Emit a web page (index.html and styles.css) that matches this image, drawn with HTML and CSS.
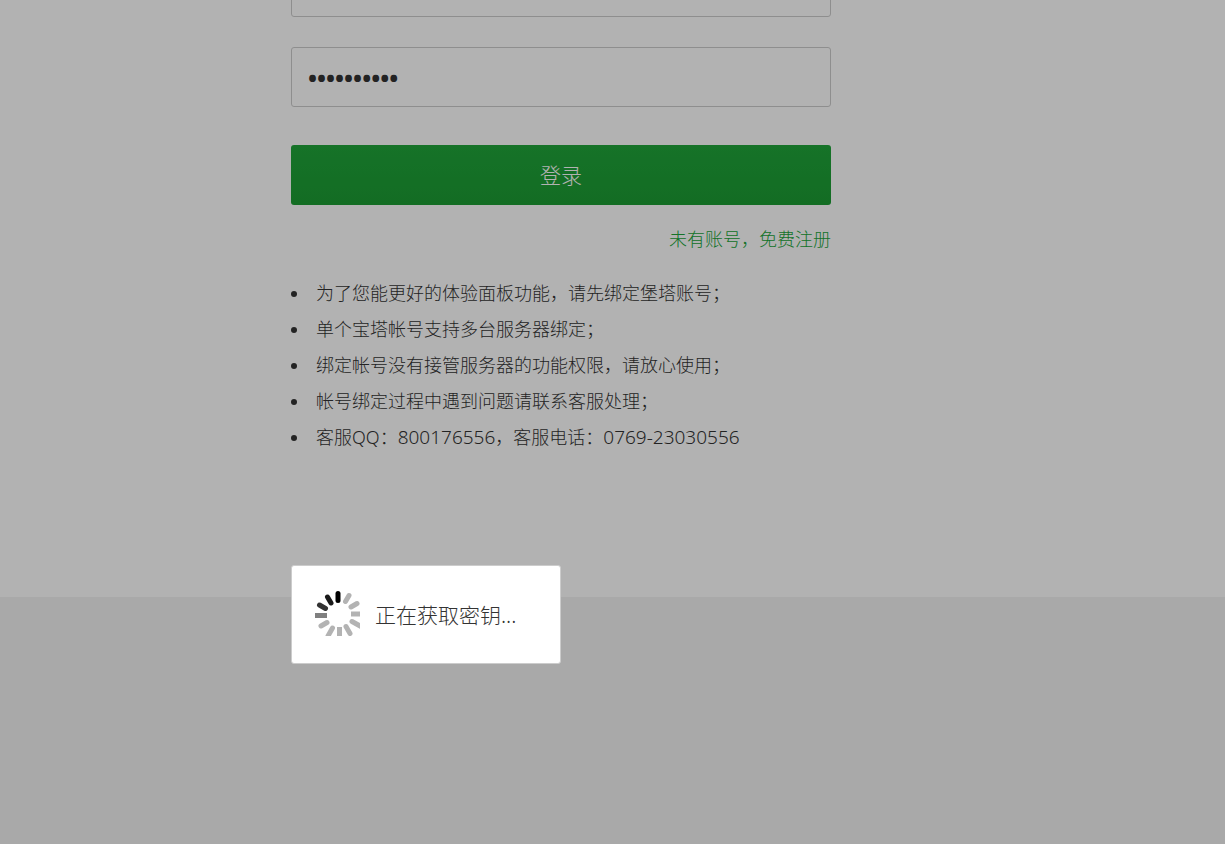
FILE: index.html
```html
<!DOCTYPE html>
<html lang="zh-CN">
<head>
    <meta charset="utf-8">
    <title>绑定宝塔账号</title>
    <link rel="stylesheet" href="styles.css">
</head>
<body>
    <main class="bind-page">
        <form class="bind-form">
            <input class="bind-input" type="text" name="username" aria-label="手机号码">
            <input class="bind-input" type="password" name="password" value="1234567890" aria-label="密码">
            <button class="login-button" type="button">登录</button>
            <div class="register">
                <a class="register-link" href="#">未有账号，免费注册</a>
            </div>
            <ul class="bind-tips">
                <li>为了您能更好的体验面板功能，请先绑定堡塔账号；</li>
                <li>单个宝塔帐号支持多台服务器绑定；</li>
                <li>绑定帐号没有接管服务器的功能权限，请放心使用；</li>
                <li>帐号绑定过程中遇到问题请联系客服处理；</li>
                <li>客服QQ：<span class="number">800176556</span>，客服电话：<span class="number">0769-23030556</span></li>
            </ul>
        </form>
    </main>

    <div class="shade"></div>
    <div class="loading" role="status">
        <svg class="loading-icon" viewBox="0 0 45 45" aria-hidden="true">
            <g fill="none" stroke="#b3b3b3" stroke-width="5">
                <path d="M30.500 10.500 34 4.500" stroke-linecap="round"/>
                <path d="M36 16 42 12.500" stroke-linecap="round"/>
                <path d="M36 23H45"/>
                <path d="M37 30.500 46 35.500" stroke-linecap="round"/>
                <path d="M31 35.500 35 42.500" stroke-linecap="round"/>
                <path d="M24.500 36V45"/>
                <path d="M17.500 37 13 45" stroke-linecap="round"/>
                <path d="M12 31.500 6 35" stroke-linecap="round"/>
                <path d="M0 24.500H12" stroke="#808080"/>
                <path d="M10.500 17.500 4.500 14" stroke="#333" stroke-linecap="round"/>
                <path d="M16 12 12.500 6" stroke="#1a1a1a" stroke-linecap="round"/>
                <path d="M23 9.500V2.500" stroke="#000" stroke-linecap="round"/>
            </g>
        </svg>
        <span>正在获取密钥...</span>
    </div>
</body>
</html>
```

FILE: styles.css
```css
* {
    box-sizing: border-box;
}

body {
    margin: 0;
    min-height: 100vh;
    overflow: hidden;
    background-color: #f2f2f2;
    color: #333;
    font-family: "Noto Sans", "Noto Sans CJK SC", sans-serif;
    font-size: 18px;
    font-weight: 300;
}

.bind-page {
    display: flow-root;
    padding: 0 20px 142px 291px;
    background-color: #fff;
}

/* the form is scrolled part way past the top of the window */
.bind-form {
    max-width: 540px;
    margin-top: -43px;
}

.bind-input {
    display: block;
    width: 100%;
    height: 60px;
    margin-bottom: 30px;
    padding: 0 16px;
    border: 1px solid #ccc;
    border-radius: 3px;
    background-color: #fff;
    color: #333;
    font: inherit;
    font-size: 24px;
    font-weight: 700;
}

.login-button {
    display: block;
    width: 100%;
    height: 60px;
    margin-top: 38px;
    padding: 0 6px 2px;
    border: none;
    border-radius: 3px;
    background: linear-gradient(#20a53a, #1c9c33);
    color: #fff;
    font: inherit;
    font-size: 21px;
    cursor: pointer;
}

.register {
    margin: 20px 0 22px;
    line-height: 28px;
    text-align: right;
}

.register-link {
    color: #20a53a;
    text-decoration: none;
}

.bind-tips {
    margin: 0;
    padding: 0;
    line-height: 36px;
    list-style: disc inside;
}

.number {
    font-size: 19px;
    line-height: 1;
}

.shade {
    position: fixed;
    inset: 0;
    background-color: rgba(0, 0, 0, 0.3);
}

.loading {
    position: absolute;
    top: 565px;
    left: 291px;
    display: flex;
    align-items: center;
    gap: 15px;
    width: 270px;
    height: 99px;
    padding: 0 23px 2px;
    border: 1px solid #ccc;
    border-radius: 3px;
    background-color: #fff;
    font-size: 21px;
}

.loading-icon {
    width: 45px;
    height: 45px;
}
```
